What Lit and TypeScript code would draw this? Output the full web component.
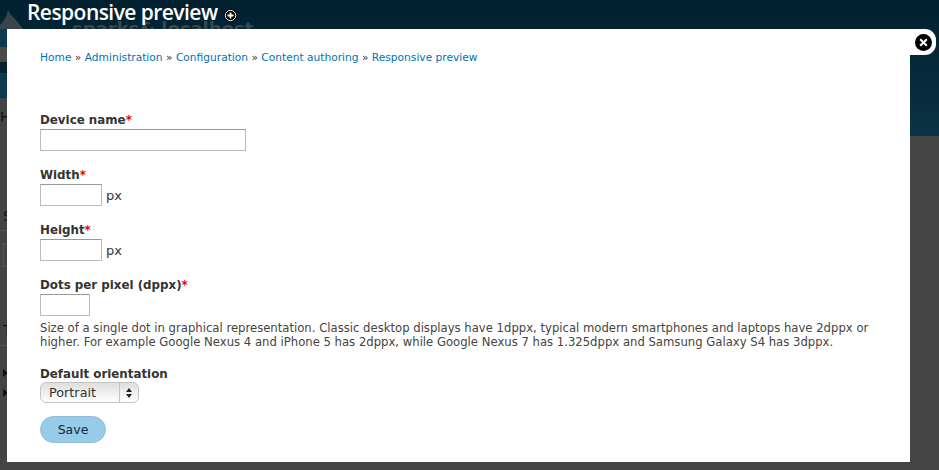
import { LitElement, html, css } from "lit";
import { customElement } from "lit/decorators.js";

@customElement("app-root")
export class AppRoot extends LitElement {
  static styles = css`
    :host { display: block; width: 939px; height: 470px; position: relative; overflow: hidden; background: #444; font-family: "DejaVu Sans", sans-serif; color: #333; }
    .page-head { height: 136px; background: linear-gradient(#00202f, #0c3245); position: relative; overflow: hidden; }
    .ghost { position: absolute; left: 72px; top: 18px; font-size: 18px; font-weight: 700; color: #3a484e; white-space: nowrap; }
    .title { position: absolute; left: 27px; top: 0; display: flex; align-items: center; gap: 7px; font-family: "Open Sans", "DejaVu Sans", sans-serif; font-size: 21px; letter-spacing: -0.55px; font-weight: 600; color: #fff; line-height: 25px; white-space: nowrap; }
    .title svg { margin-top: 5px; }
    .drop { position: absolute; left: 0; top: 0; }
    .strip { position: absolute; left: 0; width: 7px; }
    .bg-text { position: absolute; left: 0; font-size: 14px; color: #111; line-height: 16px; white-space: nowrap; }
    .bg-line { position: absolute; left: 0; width: 7px; height: 1px; background: #555; }
    .bg-box { position: absolute; left: 3px; top: 243px; width: 4px; height: 24px; box-sizing: border-box; border: 1px solid #555; border-right: 0; }
    .tri { position: absolute; left: 3px; width: 0; height: 0; border-left: 5px solid #111; border-top: 4px solid transparent; border-bottom: 4px solid transparent; }
    .dialog { position: absolute; left: 7px; top: 29px; width: 903px; height: 433px; box-sizing: border-box; background: #fff; padding: 22px 33px 0; }
    .close { position: absolute; left: 903px; top: 0; width: 26px; height: 26px; background: #fff; border-radius: 0 11px 11px 0; display: flex; align-items: center; justify-content: center; }
    .crumbs { font-size: 10.65px; line-height: 14px; color: #333; }
    .crumbs a { color: #0071b3; text-decoration: none; }
    form { display: flex; flex-direction: column; margin-top: 47px; }
    label { font-size: 11.85px; font-weight: 700; line-height: 16px; display: block; margin-bottom: 1px; }
    label i { color: #e00; font-style: normal; }
    .item { margin-bottom: 16px; }
    .item.last { margin-bottom: 17px; }
    .row { display: flex; align-items: center; gap: 4px; font-size: 13px; }
    .box { box-sizing: border-box; height: 22px; border: 1px solid #bbb; border-top-color: #999; background: #fff; padding: 0; display: block; }
    .box.w-name { width: 206px; }
    .box.w-px { width: 62px; }
    .box.w-dot { width: 50px; }
    .desc { font-size: 11.65px; line-height: 14px; color: #444; margin-top: 5px; width: 850px; }
    .orient label { margin-bottom: 0; }
    .sel { box-sizing: border-box; width: 99px; height: 21px; border: 1px solid #c4c4c4; border-radius: 6px; background: linear-gradient(#dedede, #efefef 50%, #fff); display: flex; font-size: 12.8px; color: #333; line-height: 19px; }
    .sel span { flex: 1; padding-left: 8px; }
    .sel div { width: 18px; border-left: 1px solid #c4c4c4; display: flex; align-items: center; justify-content: center; }
    button { box-sizing: border-box; width: 66px; height: 27px; border: 1px solid #8fbfd8; border-radius: 14px; background: #97cbe8; color: #0c2a3c; font: 12.5px "DejaVu Sans", sans-serif; padding: 0; margin-top: 13px; display: block; }
    .s1 { top: 29px; height: 18px; background: #0d3a4d; }
    .s2 { top: 47px; height: 15px; background: #4a4a4a; }
    .s3 { top: 62px; height: 11px; background: #04222f; }
    .s4 { top: 73px; height: 25px; background: #0d3a4d; }
    .s5 { top: 98px; height: 38px; background: #444; }
  `;

  render() {
    return html`
      <div class="page-head">
        <svg class="drop" width="30" height="29" viewBox="0 0 30 29"><path d="M0 25C4 21 7 16 8 10C11 16 18 21 23 29H0z" fill="#39454a"/></svg>
        <div class="ghost">sparks& localhost</div>
        <div class="title">Responsive preview
          <svg width="13" height="13" viewBox="0 0 13 13"><circle cx="6.5" cy="6.5" r="6.5" fill="#000"/><circle cx="6.5" cy="6.5" r="5.2" fill="none" stroke="#fff"/><path d="M6.5 3.5v6M3.5 6.5h6" stroke="#fff" stroke-width="1.8"/></svg>
        </div>
      </div>
      <div class="strip s1"></div><div class="strip s2"></div><div class="strip s3"></div><div class="strip s4"></div><div class="strip s5"></div>
      <div class="bg-text" style="top:109px">Home</div>
      <div class="bg-text" style="top:208px;left:3px">S</div>
      <div class="bg-line" style="top:230px"></div>
      <div class="bg-box"></div>
      <div class="bg-text" style="top:322px;left:3px">T</div>
      <div class="bg-line" style="top:345px"></div>
      <div class="tri" style="top:369px"></div>
      <div class="tri" style="top:389px"></div>
      <div class="dialog">
        <div class="close">
          <svg width="17" height="17" viewBox="0 0 18 18"><circle cx="9" cy="9" r="9" fill="#000"/><path d="M5.5 5.5l7 7M12.5 5.5l-7 7" stroke="#fff" stroke-width="2.2"/></svg>
        </div>
        <div class="crumbs"><a>Home</a> » <a>Administration</a> » <a>Configuration</a> » <a>Content authoring</a> » <a>Responsive preview</a></div>
        <form>
          <div class="item"><label>Device name<i>*</i></label><div class="box w-name"></div></div>
          <div class="item"><label>Width<i>*</i></label><div class="row"><div class="box w-px"></div>px</div></div>
          <div class="item"><label>Height<i>*</i></label><div class="row"><div class="box w-px"></div>px</div></div>
          <div class="item last"><label>Dots per pixel (dppx)<i>*</i></label><div class="box w-dot"></div>
            <div class="desc">Size of a single dot in graphical representation. Classic desktop displays have 1dppx, typical modern smartphones and laptops have 2dppx or higher. For example Google Nexus 4 and iPhone 5 has 2dppx, while Google Nexus 7 has 1.325dppx and Samsung Galaxy S4 has 3dppx.</div>
          </div>
          <div class="orient"><label>Default orientation</label>
            <div class="sel"><span>Portrait</span><div><svg width="6" height="10" viewBox="0 0 6 10"><path d="M3 0L6 4H0zM3 10L0 6h6z" fill="#222"/></svg></div></div>
          </div>
          <div><button type="button">Save</button></div>
        </form>
      </div>
    `;
  }
}
